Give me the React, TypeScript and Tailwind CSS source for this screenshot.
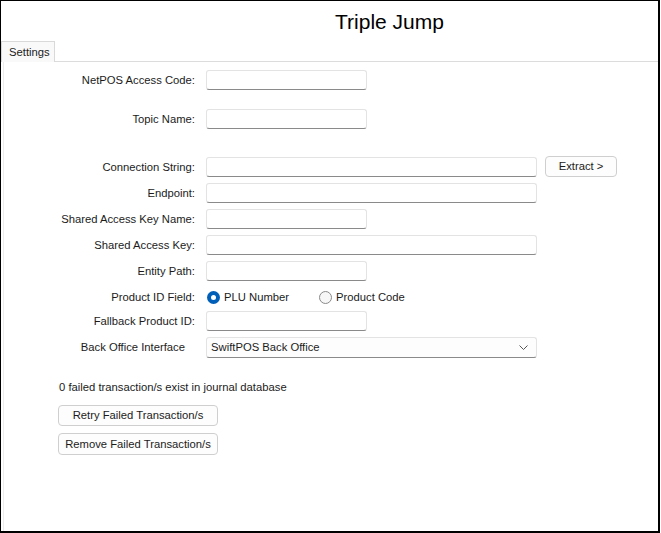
import React from "react";

const font = { fontFamily: '"Liberation Sans", Arial, sans-serif' };

function Field({ label, wide }: { label: string; wide?: boolean }) {
  return (
    <div className="flex items-end h-[20px]">
      <div className="w-[191px] text-right text-[11.25px] leading-[20px] text-[#1b1b1b] self-center">{label}</div>
      <div
        className={`ml-[11px] h-[20px] bg-white border border-[#e3e3e3] border-b-[#8a8a8a] rounded-[3px] ${
          wide ? "w-[331px]" : "w-[161px]"
        }`}
      />
    </div>
  );
}

function Radio({ checked, label }: { checked?: boolean; label: string }) {
  return (
    <div className="flex items-center">
      {checked ? (
        <span className="w-[13px] h-[13px] rounded-full bg-[#005fb8] flex items-center justify-center">
          <span className="w-[5px] h-[5px] rounded-full bg-white" />
        </span>
      ) : (
        <span className="w-[13px] h-[13px] rounded-full border border-[#8a8a8a] bg-[#f7f7f7]" />
      )}
      <span className="ml-[4px] text-[11.25px] text-[#1b1b1b]">{label}</span>
    </div>
  );
}

function Btn({ children, className }: { children: React.ReactNode; className: string }) {
  return (
    <div
      className={`flex items-center justify-center bg-[#fdfdfd] border border-[#cfcfcf] rounded-[4px] text-[11.25px] text-[#1b1b1b] ${className}`}
    >
      {children}
    </div>
  );
}

export default function App() {
  return (
    <div className="w-[661px] h-[533px] bg-white" style={font}>
      <div className="w-[660px] h-[533px] border-l border-t border-r-2 border-b-2 border-black flex flex-col">
        {/* title */}
        <div className="h-[40px] pl-[120px] flex items-center justify-center">
          <span className="text-[21px] text-black leading-none mt-[1px]">Triple Jump</span>
        </div>

        {/* tab strip */}
        <div className="flex h-[21px]">
          <div className="w-[54px] h-[21px] bg-[#f9f9f9] border border-b-0 border-[#d9d9d9] flex items-center pl-[7px] text-[11.25px] text-[#1b1b1b]">
            Settings
          </div>
          <div className="flex-1 border-b border-[#dcdcdc]" />
        </div>

        {/* panel */}
        <div className="flex-1 ml-[2px] border-l border-[#ececec] pt-[8px]">
          <Field label="NetPOS Access Code:" />
          <div className="mt-[19px]">
            <Field label="Topic Name:" />
          </div>

          <div className="mt-[27px] flex items-end h-[21px]">
            <div className="w-[191px] text-right text-[11.25px] leading-[20px] text-[#1b1b1b] self-center">
              Connection String:
            </div>
            <div className="ml-[11px] w-[331px] h-[20px] bg-white border border-[#e3e3e3] border-b-[#8a8a8a] rounded-[3px]" />
            <Btn className="ml-[8px] w-[72px] h-[21px]">Extract &gt;</Btn>
          </div>

          <div className="mt-[6px]">
            <Field label="Endpoint:" wide />
          </div>
          <div className="mt-[6px]">
            <Field label="Shared Access Key Name:" />
          </div>
          <div className="mt-[6px]">
            <Field label="Shared Access Key:" wide />
          </div>
          <div className="mt-[6px]">
            <Field label="Entity Path:" />
          </div>

          <div className="mt-[6px] flex items-center h-[20px]">
            <div className="w-[191px] text-right text-[11.25px] text-[#1b1b1b]">Product ID Field:</div>
            <div className="ml-[12px] w-[112px]">
              <Radio checked label="PLU Number" />
            </div>
            <Radio label="Product Code" />
          </div>

          <div className="mt-[4px]">
            <Field label="Fallback Product ID:" />
          </div>

          <div className="mt-[6px] flex items-center h-[21px]">
            <div className="w-[181px] text-right text-[11.25px] text-[#1b1b1b]">Back Office Interface</div>
            <div className="ml-[21px] w-[331px] h-[21px] bg-[#fdfdfd] border border-[#e3e3e3] border-b-[#8a8a8a] rounded-[3px] flex items-center justify-between pl-[4px] pr-[8px] text-[11.25px] text-[#1b1b1b]">
              <span>SwiftPOS Back Office</span>
              <svg width="9" height="5" viewBox="0 0 9 5" fill="none">
                <path d="M0.5 0.5 L4.5 4.5 L8.5 0.5" stroke="#555" strokeWidth="1" />
              </svg>
            </div>
          </div>

          <div className="mt-[22px] pl-[55px] text-[11.25px] leading-[14px] text-[#1b1b1b]">
            0 failed transaction/s exist in journal database
          </div>

          <div className="mt-[11px] pl-[54px]">
            <Btn className="w-[160px] h-[21px]">Retry Failed Transaction/s</Btn>
          </div>
          <div className="mt-[7px] pl-[54px]">
            <Btn className="w-[160px] h-[22px]">Remove Failed Transaction/s</Btn>
          </div>
        </div>
      </div>
    </div>
  );
}
